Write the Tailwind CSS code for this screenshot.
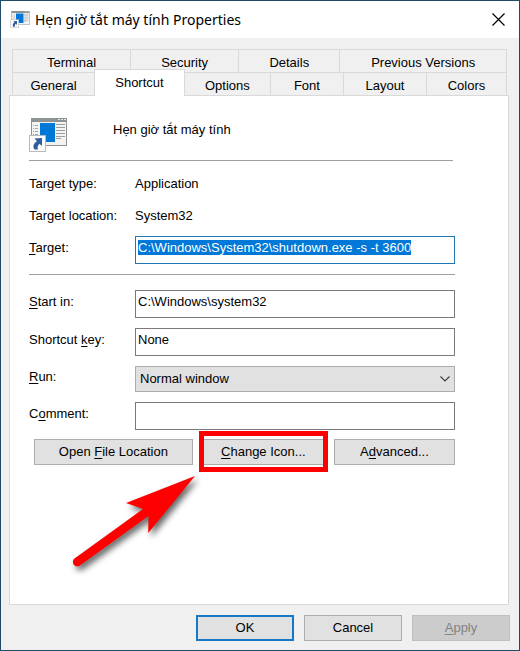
<!DOCTYPE html>
<html lang="vi">
<head>
<meta charset="utf-8">
<meta name="viewport" content="width=device-width, initial-scale=1">
<title>Hẹn giờ tắt máy tính Properties</title>
<script src="https://cdn.jsdelivr.net/npm/@tailwindcss/browser@4"></script>
</head>
<body class="bg-[#f0f0f0] font-['Liberation_Sans',Arial,sans-serif] text-[13px] leading-4 text-black">
<svg class="hidden" aria-hidden="true">
  <symbol id="shortcut-icon" viewBox="0 0 38 34">
    <rect x="2.5" y=".5" width="35" height="27" fill="#f3f3f3" stroke="#8d9393"/>
    <rect x="2" y="0" width="36" height="4" fill="#8d9393"/>
    <path d="M29 1.500h2M32 1.500h2M35 1.500h2" stroke="#e8e8e8"/>
    <path d="M4 7.500h1M6 7.500h3M4 10.500h1M6 10.500h3M4 13.500h1M6 13.500h3M4 16.500h1M6 16.500h3" stroke="#a5a5a5"/>
    <rect x="11" y="5" width="15" height="19" fill="#0078d7"/>
    <path d="M27 6.500h9M27 9.500h9M27 12.500h9M27 15.500h9M27 18.500h9M27 20.500h5" stroke="#9d9d9d"/>
    <rect x=".5" y="17.500" width="16" height="16" fill="#fbfbfb" stroke="#b9b9b9"/>
    <path d="M5.500 20.500L13 20V28L10.500 25.700C8.500 27.500 8.300 29.500 9 31.500L5.500 31.500C3.500 28.500 4.500 25 8 23.200Z" fill="#2f5c9e"/>
  </symbol>
</svg>
<div class="relative flex min-h-screen flex-col border border-[#1f4b66]">
  <header class="flex h-[37px] items-center bg-white pl-[9px] pr-[14px]">
    <svg class="h-[17px] w-5 shrink-0"><use href="#shortcut-icon"/></svg>
    <h1 class="ml-[5px] flex-1 font-['Noto_Sans','Open_Sans',sans-serif] text-sm">Hẹn giờ tắt máy tính Properties</h1>
    <button type="button" aria-label="Close" class="size-[13px]">
      <svg viewBox="0 0 13 13" class="size-full" fill="none" stroke="#000" stroke-width="1.200"><path d="M.5 .5l12 12M12.500 .5l-12 12"/></svg>
    </button>
  </header>

  <main class="flex flex-1 flex-col pb-[9px] pl-2 pr-[10px] pt-[11px]">
    <div role="tablist" class="ml-[3px] mr-[2px]">
      <div class="flex h-[23px] border-l border-[#d9d9d9]">
        <button role="tab" class="flex-[118] border-r border-t border-[#d9d9d9] pt-1">Terminal</button>
        <button role="tab" class="flex-[108] border-r border-t border-[#d9d9d9] pt-1">Security</button>
        <button role="tab" class="flex-[101] border-r border-t border-[#d9d9d9] pt-1">Details</button>
        <button role="tab" class="flex-[167] border-r border-t border-[#d9d9d9] pt-1">Previous Versions</button>
      </div>
      <div class="flex h-[23px] border-l border-[#d9d9d9]">
        <button role="tab" class="flex-[82] border-t border-[#d9d9d9] pt-1">General</button>
        <button role="tab" aria-selected="true" class="relative -mb-px -mt-[3px] flex-[90] border-x border-t border-[#d9d9d9] bg-white">Shortcut</button>
        <button role="tab" class="flex-[86] border-r border-t border-[#d9d9d9] pt-1">Options</button>
        <button role="tab" class="flex-[73] border-r border-t border-[#d9d9d9] pt-1">Font</button>
        <button role="tab" class="flex-[83] border-r border-t border-[#d9d9d9] pt-1">Layout</button>
        <button role="tab" class="flex-[80] border-r border-t border-[#d9d9d9] pt-1">Colors</button>
      </div>
    </div>

    <form id="props" class="flex-1 border border-[#d9d9d9] bg-white pl-[19px] pr-[53px] pt-[22px]">
      <div class="flex items-start">
        <svg class="h-[34px] w-[38px] shrink-0"><use href="#shortcut-icon"/></svg>
        <p class="ml-[46px] mt-1">Hẹn giờ tắt máy tính</p>
      </div>
      <hr class="mr-[2px] mt-2 border-[#a0a0a0]">
      <dl class="mt-[15px] grid grid-cols-[106px_1fr] gap-y-4">
        <dt>Target type:</dt><dd>Application</dd>
        <dt>Target location:</dt><dd>System32</dd>
      </dl>
      <div class="mt-3 grid grid-cols-[106px_1fr] items-center">
        <label for="target" class="pb-1"><u class="underline-offset-2">T</u>arget:</label>
        <input id="target" autofocus class="h-7 min-w-0 rounded-none border border-[#2077b5] pb-2 pl-[2px] pt-[2px] caret-transparent outline-none selection:bg-[#0078d7] selection:text-white" value="C:\Windows\System32\shutdown.exe -s -t 3600">
      </div>
      <hr class="mt-[10px] border-[#a0a0a0]">
      <div class="mt-[15px] grid grid-cols-[106px_1fr] items-center gap-y-[10px]">
        <label for="start" class="pb-1"><u class="underline-offset-2">S</u>tart in:</label>
        <input id="start" class="h-7 min-w-0 border border-[#7a7a7a] pb-2 pl-[2px] pt-[2px]" value="C:\Windows\system32">
        <label for="key" class="pb-1">Shortcut <u class="underline-offset-2">k</u>ey:</label>
        <input id="key" class="h-7 min-w-0 border border-[#7a7a7a] pb-2 pl-[2px] pt-[2px]" value="None">
        <label for="run" class="pb-1"><u class="underline-offset-2">R</u>un:</label>
        <div class="relative">
          <select id="run" class="block h-[26px] w-full appearance-none border border-[#adadad] bg-[#e1e1e1] pl-1"><option>Normal window</option><option>Minimized</option><option>Maximized</option></select>
          <svg class="pointer-events-none absolute right-[5px] top-[10px] h-[6px] w-[10px]" viewBox="0 0 10 6" fill="none" stroke="#404040" stroke-width="1.200"><path d="M.5 .5L5 5L9.500 .5"/></svg>
        </div>
        <label for="comment" class="pb-1">C<u class="underline-offset-2">o</u>mment:</label>
        <input id="comment" class="h-7 min-w-0 border border-[#7a7a7a] pb-2 pl-[2px] pt-[2px]">
      </div>
      <div class="mt-[9px] flex gap-[10px] pl-[5px]">
        <button type="button" class="h-[26px] flex-[158] border border-[#adadad] bg-[#e1e1e1]">Open <u class="underline-offset-2">F</u>ile Location</button>
        <div class="relative flex flex-[122]">
          <button type="button" class="h-[26px] flex-1 border border-[#adadad] bg-[#e1e1e1]"><u class="underline-offset-2">C</u>hange Icon...</button>
          <span class="pointer-events-none absolute -inset-x-1 -bottom-[7px] -top-2 border-5 border-[#fe0000]"></span>
          <svg class="pointer-events-none absolute -left-[142px] top-8 h-[110px] w-[144px] overflow-visible drop-shadow-[3px_4px_3px_rgba(0,0,0,0.6)]" viewBox="60 471 144 110" aria-hidden="true">
            <path d="M194 476L125 503L142 509L73.500 558.500C69.500 562 73.500 568.500 78.500 565.700L147.500 516L147.200 533Z" fill="#fe0000"/>
          </svg>
        </div>
        <button type="button" class="h-[26px] flex-[120] border border-[#adadad] bg-[#e1e1e1]">A<u class="underline-offset-2">d</u>vanced...</button>
      </div>
    </form>

    <footer class="-mr-px mt-[10px] flex justify-end gap-[10px]">
      <button type="submit" form="props" class="h-[26px] w-[98px] border-2 border-[#1878c8] bg-[#e1e1e1]">OK</button>
      <button type="button" class="h-[26px] w-[98px] border border-[#adadad] bg-[#e1e1e1]">Cancel</button>
      <button type="button" disabled class="h-[26px] w-[98px] border border-[#bfbfbf] bg-[#cccccc] text-[#838383]"><u class="underline-offset-2">A</u>pply</button>
    </footer>
  </main>
</div>
<script>
  const target = document.getElementById('target');
  target.focus();
  target.select();
</script>
</body>
</html>
